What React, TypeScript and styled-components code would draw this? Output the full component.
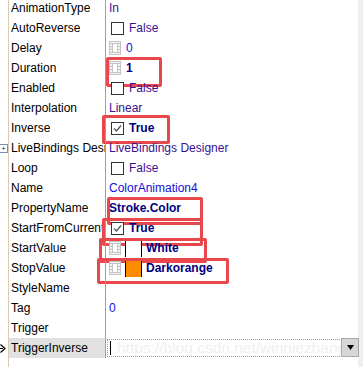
import React from "react";
import styled, { createGlobalStyle } from "styled-components";

const Global = createGlobalStyle`
  html, body { margin: 0; padding: 0; background: #ffffff; }
  body { width: 363px; height: 367px; overflow: hidden; font-family: "Liberation Sans", Arial, sans-serif; }
`;

const Inspector = styled.div`
  position: relative;
  width: 363px;
  height: 367px;
  overflow: hidden;
  background: #ffffff;
  display: grid;
  grid-template-columns: 1fr 5px;
`;

const Scrollbar = styled.div`
  background: #efefef;
`;

const Grid = styled.div`
  display: flex;
  flex-direction: column;
  margin-top: -2px;
  height: 369px;
  background: linear-gradient(to right, transparent 8px, #d9cbb0 8px, #d9cbb0 9px, transparent 9px);
`;

const Row = styled.div`
  position: relative;
  display: grid;
  grid-template-columns: 9px 97px 1fr;
  height: 20px;
  flex: none;
`;

const Gutter = styled.div`
  display: flex;
  align-items: center;
  justify-content: flex-start;
`;

const NameCell = styled.div<{ $selected?: boolean }>`
  display: flex;
  align-items: center;
  padding-left: 2px;
  font-size: 12px;
  color: #000;
  white-space: nowrap;
  overflow: hidden;
  border-right: 1px solid #a0a0a0;
  background: ${(p) => (p.$selected ? "#e1e1e1" : "transparent")};
`;

const NameText = styled.span`
  overflow: hidden;
`;

const ValueCell = styled.div`
  position: relative;
  display: flex;
  align-items: center;
  gap: 5px;
  padding-left: 3px;
  font-size: 12px;
  white-space: nowrap;
`;

const Value = styled.span<{ $bold?: boolean; $tone?: "purple" | "blue" | "navy" }>`
  font-weight: ${(p) => (p.$bold ? 700 : 400)};
  color: ${(p) =>
    p.$tone === "blue" ? "#1010d8" : p.$tone === "navy" ? "#000080" : "#3a1190"};
`;

const Check = styled.span`
  display: inline-flex;
  align-items: center;
  justify-content: center;
  width: 11px;
  height: 11px;
  border: 1px solid #333;
  margin-left: 2px;
  background: #fff;
`;

const Swatch = styled.span<{ $color: string }>`
  width: 15px;
  height: 18px;
  background: ${(p) => p.$color};
  border-left: 1px solid #000;
  border-right: 1px solid #000;
  margin-left: -1px;
  margin-right: -1px;
`;

const Mark = styled.span`
  position: absolute;
  border: 3px solid #e8474c;
  border-radius: 2px;
  pointer-events: none;
`;

const Expander = styled.span`
  display: inline-flex;
  align-items: center;
  justify-content: center;
  width: 7px;
  height: 7px;
  border: 1px solid #7a8fb0;
  font-size: 8px;
  line-height: 7px;
  color: #334;
  background: #fff;
  margin-left: -1px;
`;

const EditBox = styled.div`
  position: absolute;
  left: 1px;
  right: 0;
  top: 1px;
  bottom: 1px;
  border: 1px dotted #9a9a9a;
  display: flex;
  align-items: center;
  padding-left: 2px;
  overflow: hidden;
`;

const Caret = styled.span`
  width: 1px;
  height: 14px;
  background: #000;
  flex: none;
`;

const Watermark = styled.span`
  margin-left: 6px;
  font-size: 15.5px;
  color: #efefef;
`;

const DropButton = styled.div`
  position: absolute;
  right: -1px;
  top: 0;
  width: 16px;
  height: 17px;
  background: #d6d6d6;
  border: 1px solid #a8a8a8;
  display: flex;
  align-items: center;
  justify-content: center;
`;

const Film = () => (
  <svg width="12" height="14" viewBox="0 0 12 14">
    <rect x="0.5" y="0.5" width="11" height="13" fill="#f4f4f4" stroke="#c4c4c4" />
    <rect x="3.5" y="2.5" width="5" height="9" fill="#fff" stroke="#c4c4c4" />
    {[2, 5, 8, 11].map((y) => (
      <g key={y}>
        <line x1="0.5" y1={y + 0.5} x2="3" y2={y + 0.5} stroke="#c4c4c4" />
        <line x1="9" y1={y + 0.5} x2="11.5" y2={y + 0.5} stroke="#c4c4c4" />
      </g>
    ))}
  </svg>
);

const Tick = () => (
  <svg width="11" height="11" viewBox="0 0 11 11">
    <polyline points="2,5.5 4.5,8 9,2.5" fill="none" stroke="#555" strokeWidth="1.3" />
  </svg>
);

const Pointer = () => (
  <svg width="6" height="9" viewBox="0 0 6 9">
    <polyline points="0.5,0.5 5,4.5 0.5,8.5" fill="none" stroke="#000" strokeWidth="1.2" />
    <line x1="0" y1="4.5" x2="3" y2="4.5" stroke="#000" />
  </svg>
);

type MarkBox = { left: number; top: number; width: number; height: number };

type Prop = {
  name: string;
  value?: React.ReactNode;
  mark?: MarkBox;
  expand?: boolean;
};

const props: Prop[] = [
  { name: "AnimationType", value: <Value>In</Value> },
  { name: "AutoReverse", value: <><Check /><Value>False</Value></> },
  { name: "Delay", value: <><Film /><Value $tone="blue">0</Value></> },
  {
    name: "Duration",
    value: <><Film /><Value $tone="navy" $bold>1</Value></>,
    mark: { left: 0, top: -1, width: 50, height: 24 },
  },
  { name: "Enabled", value: <><Check /><Value>False</Value></> },
  { name: "Interpolation", value: <Value>Linear</Value> },
  {
    name: "Inverse",
    value: <><Check><Tick /></Check><Value $tone="navy" $bold>True</Value></>,
    mark: { left: -4, top: -3, width: 62, height: 23 },
  },
  { name: "LiveBindings Designer", value: <Value>LiveBindings Designer</Value>, expand: true },
  { name: "Loop", value: <><Check /><Value>False</Value></> },
  { name: "Name", value: <Value $tone="blue">ColorAnimation4</Value> },
  {
    name: "PropertyName",
    value: <Value $tone="navy" $bold>Stroke.Color</Value>,
    mark: { left: 1, top: -1, width: 90, height: 22 },
  },
  {
    name: "StartFromCurrent",
    value: <><Check><Tick /></Check><Value $tone="navy" $bold>True</Value></>,
    mark: { left: -4, top: 0, width: 95, height: 22 },
  },
  {
    name: "StartValue",
    value: <><Film /><Swatch $color="#ffffff" /><Value $tone="navy" $bold>White</Value></>,
    mark: { left: -7, top: 0, width: 102, height: 19 },
  },
  {
    name: "StopValue",
    value: <><Film /><Swatch $color="#ff8c00" /><Value $tone="navy" $bold>Darkorange</Value></>,
    mark: { left: -9, top: 0, width: 126, height: 20 },
  },
  { name: "StyleName" },
  { name: "Tag", value: <Value $tone="blue">0</Value> },
  { name: "Trigger" },
];

export default function App() {
  return (
    <>
      <Global />
      <Inspector>
        <Grid>
          {props.map((p) => (
            <Row key={p.name}>
              <Gutter>{p.expand && <Expander>+</Expander>}</Gutter>
              <NameCell>
                <NameText>{p.name}</NameText>
              </NameCell>
              <ValueCell>
                {p.value}
                {p.mark && (
                  <Mark
                    style={{
                      left: p.mark.left,
                      top: p.mark.top,
                      width: p.mark.width,
                      height: p.mark.height,
                    }}
                  />
                )}
              </ValueCell>
            </Row>
          ))}
          <Row>
            <Gutter>
              <Pointer />
            </Gutter>
            <NameCell $selected>
              <NameText>TriggerInverse</NameText>
            </NameCell>
            <ValueCell>
              <EditBox>
                <Caret />
                <Watermark>https://blog.csdn.net/winniezhang</Watermark>
              </EditBox>
              <DropButton>
                <svg width="7" height="5" viewBox="0 0 7 5">
                  <polygon points="0,0 7,0 3.5,5" fill="#000" />
                </svg>
              </DropButton>
            </ValueCell>
          </Row>
        </Grid>
        <Scrollbar />
      </Inspector>
    </>
  );
}
